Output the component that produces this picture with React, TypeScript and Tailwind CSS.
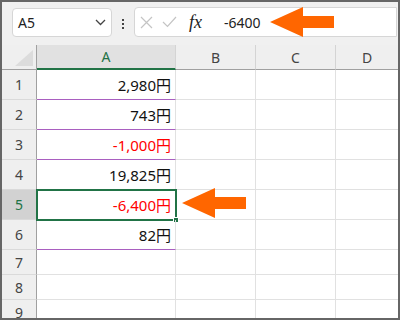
const FONT = { fontFamily: '"Noto Sans", "Noto Sans CJK JP", sans-serif' };

interface Row {
  n: number;
  value: string;
  red?: boolean;
}

const ROWS: Row[] = [
  { n: 1, value: '2,980円' },
  { n: 2, value: '743円' },
  { n: 3, value: '-1,000円', red: true },
  { n: 4, value: '19,825円' },
  { n: 5, value: '-6,400円', red: true },
  { n: 6, value: '82円' },
  { n: 7, value: '' },
  { n: 8, value: '' },
  { n: 9, value: '' },
];

function Arrow() {
  return (
    <svg width="64" height="30" viewBox="0 0 64 30">
      <polygon points="0,15 33,0 33,9 64,9 64,21 33,21 33,30" fill="#ff6600" />
    </svg>
  );
}

export default function App() {
  return (
    <div
      className="relative w-[400px] h-[320px] border-2 border-[#666666] bg-white overflow-hidden flex flex-col text-[#333]"
      style={FONT}
    >
      {/* toolbar */}
      <div className="h-[43px] shrink-0 bg-[#f0f0f0] flex items-start">
        <div className="ml-[10px] mt-[6px] w-[100px] h-[29px] bg-white border border-[#d6d6d6] rounded-[4px] flex items-center justify-between pl-[5px] pr-[5px]">
          <span className="text-[14px] text-[#222]">A5</span>
          <svg width="11" height="7" viewBox="0 0 11 7">
            <polyline points="1,1 5.5,5.5 10,1" fill="none" stroke="#444" strokeWidth="1.3" />
          </svg>
        </div>
        <div className="w-[22px] h-[43px] flex flex-col items-center justify-center gap-[2px] pt-[1px]">
          <span className="w-[2px] h-[2px] bg-[#444]" />
          <span className="w-[2px] h-[2px] bg-[#444]" />
          <span className="w-[2px] h-[2px] bg-[#444]" />
        </div>
        <div className="flex-1 mt-[5px] mr-[1px] h-[30px] bg-white border border-[#d6d6d6] rounded-l-[4px] flex items-center">
          <svg className="ml-[5px]" width="13" height="13" viewBox="0 0 13 13">
            <path d="M1 1 L12 12 M12 1 L1 12" stroke="#c4c4c4" strokeWidth="1.2" />
          </svg>
          <svg className="ml-[9px]" width="15" height="12" viewBox="0 0 15 12">
            <polyline points="1,6 5.5,10.5 14,1" fill="none" stroke="#c4c4c4" strokeWidth="1.2" />
          </svg>
          <span
            className="ml-[12px] text-[18px] italic text-[#222] leading-none"
            style={{ fontFamily: '"Liberation Serif", serif' }}
          >
            fx
          </span>
          <span className="ml-[22px] text-[14px] text-[#222]">-6400</span>
        </div>
      </div>

      {/* column headers */}
      <div className="flex h-[25px] shrink-0 bg-[#efefef] text-[14px] text-[#444]">
        <div className="w-[35px] h-[25px] border-r border-b border-[#a0a0a0] flex items-end justify-end pr-[3px] pb-[3px]">
          <svg width="18" height="16" viewBox="0 0 18 16">
            <polygon points="18,0 18,16 0,16" fill="#dcdcdc" />
          </svg>
        </div>
        <div className="w-[139px] h-[25px] bg-[#e1e1e1] border-r border-r-[#d4d4d4] border-b-2 border-b-[#217346] flex items-center justify-center text-[#217346]">
          A
        </div>
        <div className="w-[80px] h-[25px] border-r border-r-[#d4d4d4] border-b border-b-[#a0a0a0] flex items-center justify-center">
          B
        </div>
        <div className="w-[80px] h-[25px] border-r border-r-[#d4d4d4] border-b border-b-[#a0a0a0] flex items-center justify-center">
          C
        </div>
        <div className="flex-1 h-[25px] border-b border-b-[#a0a0a0] flex items-center justify-center">
          D
        </div>
      </div>

      {/* rows */}
      {ROWS.map((r) => {
        const tall = r.n <= 6;
        const active = r.n === 5;
        return (
          <div key={r.n} className={`flex shrink-0 ${tall ? 'h-[30px]' : 'h-[25px]'}`}>
            <div
              className={`w-[35px] border-r border-r-[#a0a0a0] border-b border-b-[#dadada] flex items-center justify-center text-[14px] ${
                active ? 'bg-[#d2d2d2] text-[#217346]' : 'bg-[#efefef] text-[#444]'
              }`}
            >
              {r.n}
            </div>
            <div
              className={`relative w-[139px] border-r border-r-[#e1e1e1] border-b flex items-center justify-end pr-[4px] pt-[2px] text-[15px] ${
                tall ? 'border-b-[#a95fc0]' : 'border-b-[#e1e1e1]'
              } ${r.red ? 'text-[#ff0000]' : 'text-[#111]'}`}
            >
              {r.value}
              {active && (
                <div className="absolute -left-[1px] -top-[1px] w-[141px] h-[32px] border-2 border-[#217346]">
                  <div className="absolute -right-[4px] -bottom-[4px] w-[6px] h-[6px] bg-[#217346] border border-white" />
                </div>
              )}
            </div>
            <div className="w-[80px] border-r border-r-[#e1e1e1] border-b border-b-[#e1e1e1]" />
            <div className="w-[80px] border-r border-r-[#e1e1e1] border-b border-b-[#e1e1e1]" />
            <div className="flex-1 border-b border-b-[#e1e1e1]" />
          </div>
        );
      })}

      {/* arrows */}
      <div className="absolute left-[268px] top-[5px]">
        <Arrow />
      </div>
      <div className="absolute left-[180px] top-[186px]">
        <Arrow />
      </div>
    </div>
  );
}
